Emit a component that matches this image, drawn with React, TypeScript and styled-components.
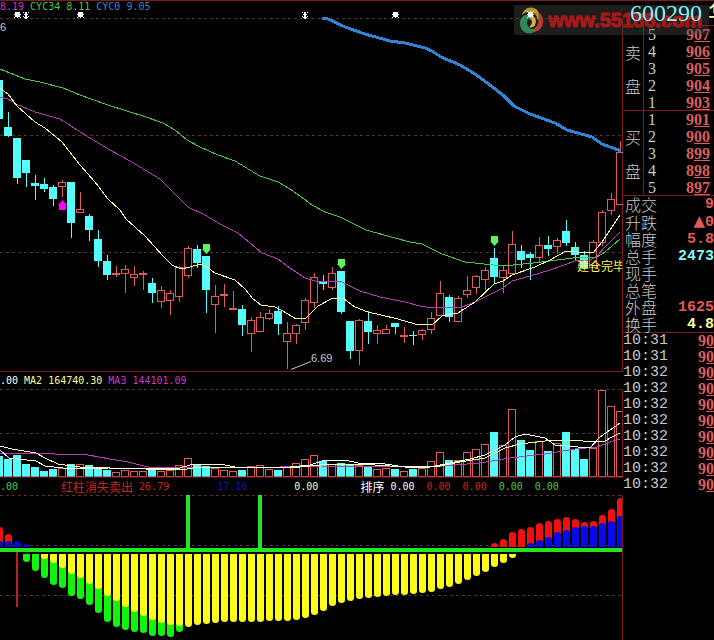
import React from "react";
import styled, { createGlobalStyle } from "styled-components";

const C = {
  cyan: "#54fcfc",
  red: "#e05a5a",
  grid: "#54342e",
  frame: "#7c1c1c",
  yellow: "#fcfc9c",
  magenta: "#b83cb8",
  green: "#48c848",
  lime: "#22e622",
  grey: "#c8c8c8",
  blue: "#2f86d8",
};

const Global = createGlobalStyle`
  html, body { margin: 0; background: #000; }
  * { box-sizing: border-box; }
`;

const Page = styled.div`
  position: relative;
  display: flex;
  min-height: 100vh;
  overflow: hidden;
  background: #000;
  color: ${C.grey};
  font-family: "DejaVu Sans Mono", "Noto Sans CJK SC", monospace;
`;

const Charts = styled.main`
  flex: 1;
  min-width: 0;
  border-top: 1px solid ${C.frame};
`;

const Pane = styled.section<{ $ruled?: boolean }>`
  display: flex;
  flex-direction: column;
  border-bottom: ${(p) => (p.$ruled ? `1px solid ${C.frame}` : "0")};
`;

const Legend = styled.div<{ $height: number }>`
  display: flex;
  height: ${(p) => p.$height}px;
  line-height: ${(p) => p.$height}px;
  font-size: 10px;
  white-space: pre;
  overflow: hidden;
`;

const Value = styled.span<{ $color: string; $gap?: number }>`
  display: flex;
  gap: 6px;
  margin-left: ${(p) => p.$gap ?? 0}px;
  color: ${(p) => p.$color};
`;

const Han = styled.span`
  font-family: "Noto Sans CJK SC", sans-serif;
  font-size: 12px;
`;

const Plot = styled.svg`
  display: block;
  width: 100%;
`;

const Quote = styled.aside`
  width: 91px;
  flex: none;
  overflow: hidden;
  border-top: 1px solid ${C.frame};
`;

const Title = styled.header`
  position: relative;
  z-index: 2;
  display: flex;
  gap: 6px;
  height: 25px;
  padding-left: 7px;
  border-bottom: 1px solid ${C.frame};
  font: 24px/24px "Liberation Serif", "Noto Sans CJK SC", serif;
  color: #84f0f4;
  white-space: nowrap;
`;

const Name = styled.span`
  color: ${C.yellow};
`;

const Sheet = styled.table`
  width: 100%;
  border-collapse: separate;
  border-spacing: 0;
`;

const Book = styled(Sheet)`
  box-shadow: inset 0 -1px ${C.frame};
`;

const Side = styled.th`
  width: 21px;
  padding: 0;
  border-right: 1px solid ${C.frame};
  font: 16px/34px "Noto Sans CJK SC", sans-serif;
  font-weight: 300;
`;

const Level = styled.td`
  padding: 0 0 0 4px;
  font: 16px/17px "Liberation Serif", serif;
`;

const Price = styled.td<{ $inset: number }>`
  padding: 0 ${(p) => p.$inset}px 0 0;
  text-align: right;
  font: bold 16px/16px "Liberation Serif", serif;
  color: ${C.red};
  u {
    text-underline-offset: 1px;
    text-decoration-thickness: 1px;
  }
`;

const Row = styled.tr<{ $height: number }>`
  height: ${(p) => p.$height}px;
`;

const Label = styled.th`
  padding: 0 0 0 2px;
  text-align: left;
  font: 16px/17px "Noto Sans CJK SC", sans-serif;
  font-weight: 300;
  white-space: nowrap;
`;

const Figure = styled.td<{ $color: string }>`
  padding: 0;
  text-align: right;
  font: bold 15px/17px "Liberation Mono", monospace;
  color: ${(p) => p.$color};
`;

const Up = styled.span`
  font-family: "DejaVu Sans", sans-serif;
  font-weight: normal;
`;

const Time = styled.td`
  padding: 0;
  font: 15px/16px "Liberation Mono", monospace;
`;

const Banner = styled.div`
  position: absolute;
  z-index: 1;
  top: 5px;
  right: 5px;
  display: flex;
  align-items: center;
  gap: 4px;
  height: 30px;
  padding: 0 7px 0 4px;
  background: rgba(72, 72, 72, 0.4);
`;

const Site = styled.a`
  font: bold 20px/30px "Liberation Sans", sans-serif;
  color: #a81818;
  -webkit-text-stroke: 1px #a81818;
  text-decoration: none;
`;

type Kind = "c" | "r";
type Candle = [Kind, number, number, number, number];

const candles: Candle[] = [
  ["c", 80, 80, 119, 119], ["c", 112, 127, 136, 137], ["c", 138, 138, 178, 184],
  ["c", 160, 160, 173, 187], ["c", 175, 183, 186, 200], ["c", 178, 184, 189, 192],
  ["c", 185, 187, 199, 206], ["r", 180, 182, 187, 197], ["c", 182, 182, 223, 238],
  ["r", 192, 209, 213, 213], ["c", 214, 216, 230, 241], ["c", 230, 239, 261, 267],
  ["c", 255, 261, 275, 280], ["r", 266, 273, 275, 277], ["r", 265, 269, 274, 293],
  ["r", 266, 274, 278, 286], ["r", 271, 273, 275, 290], ["c", 278, 283, 293, 303],
  ["r", 286, 290, 302, 308], ["r", 290, 293, 301, 315], ["r", 266, 267, 297, 302],
  ["r", 246, 248, 276, 278], ["c", 245, 249, 263, 268], ["c", 256, 256, 290, 313],
  ["r", 285, 296, 305, 333], ["r", 284, 294, 296, 307], ["r", 291, 308, 310, 310],
  ["c", 305, 309, 325, 336], ["r", 317, 320, 334, 352], ["r", 312, 317, 332, 332],
  ["r", 309, 313, 319, 320], ["c", 306, 311, 324, 335], ["r", 322, 333, 342, 369],
  ["r", 324, 325, 334, 344], ["r", 298, 300, 323, 330], ["r", 273, 277, 303, 308],
  ["c", 275, 281, 284, 290], ["r", 267, 273, 288, 290], ["c", 271, 271, 312, 314],
  ["c", 321, 321, 351, 359], ["r", 319, 320, 351, 365], ["c", 311, 321, 332, 344],
  ["r", 325, 330, 334, 344], ["r", 325, 329, 334, 334], ["c", 323, 323, 327, 334],
  ["r", 327, 335, 337, 343], ["c", 331, 335, 336, 345], ["r", 329, 330, 335, 340],
  ["r", 312, 318, 330, 334], ["r", 281, 293, 316, 316], ["c", 295, 297, 317, 322],
  ["r", 296, 298, 322, 322], ["r", 276, 290, 295, 298], ["r", 275, 276, 288, 294],
  ["r", 267, 270, 280, 290], ["c", 248, 258, 277, 283], ["r", 265, 270, 278, 293],
  ["r", 231, 244, 274, 274], ["c", 245, 251, 260, 268], ["c", 252, 254, 258, 280],
  ["r", 237, 245, 258, 262], ["c", 236, 245, 249, 256], ["r", 238, 240, 247, 254],
  ["c", 220, 231, 243, 246], ["c", 242, 247, 255, 261], ["c", 251, 255, 268, 268],
  ["r", 240, 242, 268, 268], ["r", 210, 212, 243, 246], ["r", 193, 199, 211, 215],
  ["r", 141, 152, 205, 205],
];

const volumeTops = [
  456, 459, 455, 464, 467, 471, 469, 468, 464, 464, 465, 469, 470, 472, 470, 471, 471, 470, 471,
  470, 465, 458, 465, 466, 468, 470, 471, 470, 466, 465, 469, 470, 466, 463, 459, 455, 461, 464,
  463, 465, 465, 466, 469, 468, 469, 471, 469, 468, 461, 452, 460, 460, 452, 449, 444, 432, 445,
  409, 440, 450, 441, 451, 443, 432, 449, 459, 448, 390, 406, 411,
];

const greenBottoms = [
  562, 571, 578, 585, 588, 596, 599, 605, 613, 622, 627, 630, 632, 633, 636, 636, 637, 632,
];

const yellowBottoms = [
  559, 563, 568, 574, 578, 584, 589, 596, 601, 607, 612, 616, 620, 623, 625, 626, 627, 625, 624,
  623, 622, 622, 622, 622, 622, 621, 621, 621, 620, 618, 615, 611, 606, 603, 601, 599, 598, 597,
  596, 595, 595, 594, 593, 592, 589, 587, 584, 580, 576, 572, 567, 563, 558,
];

const redTops = [543, 539, 532, 529, 527, 523, 521, 519, 517, 519, 522, 521, 515, 509, 498];
const blueTops = [543, 540, 537, 532, 530, 527, 526, 526, 523, 521, 516];

const at = (i: number) => -1 + i * 9;

const Grid = ({ y }: { y: number }) => (
  <path d={`M0 ${y}.5H622`} stroke={C.grid} strokeDasharray="3 3" />
);

const Edge = ({ from, to }: { from: number; to: number }) => (
  <path d={`M622.5 ${from}V${to}`} stroke={C.frame} />
);

const Line = ({ points, color, width = 1 }: { points: string; color: string; width?: number }) => (
  <polyline
    points={points}
    fill="none"
    stroke={color}
    strokeWidth={width}
    strokeLinejoin="round"
    shapeRendering="crispEdges"
  />
);

const CandleMark = ({ x, data }: { x: number; data: Candle }) => {
  const [kind, high, top, bottom, low] = data;
  if (kind === "c") {
    return (
      <g fill={C.cyan} shapeRendering="crispEdges">
        <rect x={x} y={high} width="1" height={low - high} />
        <rect x={x - 4} y={top} width="8" height={Math.max(1, bottom - top)} />
      </g>
    );
  }
  return (
    <g fill="none" stroke={C.red} shapeRendering="crispEdges">
      <path d={`M${x + 0.5} ${high}V${top}M${x + 0.5} ${bottom}V${low}`} />
      <rect x={x - 3.5} y={top + 0.5} width="7" height={Math.max(1, bottom - top - 1)} />
    </g>
  );
};

const sunRows = ["#..#..#", ".#####.", ".#####.", "#######", ".#####.", ".#####.", "#..#..#"];
const splitRows = ["..##..", ".####.", "#.##.#", "..##..", ".####.", "..##..", "#.##.#", ".####.", "..##.."];

const Glyph = ({ x, y, rows }: { x: number; y: number; rows: string[] }) => (
  <path
    fill="#fff"
    shapeRendering="crispEdges"
    d={rows
      .map((row, r) =>
        [...row].map((dot, c) => (dot === "#" ? `M${x + c} ${y + r}h1v1h-1z` : "")).join("")
      )
      .join("")}
  />
);

const PricePlot = () => (
  <Plot height="359" viewBox="0 12 623 359" preserveAspectRatio="xMaxYMin meet" role="img" aria-label="K线">
    <Grid y={18} />
    <Grid y={135} />
    <Grid y={252} />
    <Edge from={18} to={371} />
    {candles.map((c, i) => (
      <CandleMark key={i} x={at(i)} data={c} />
    ))}
    <Line color={C.green} points="0,69 10,73 25,79 40,82 63,88 80,95 105,104 130,112 143,116 163,123 175,130 187,140 200,147 218,155 235,161 245,167 260,176 278,182 290,189 304,199 312,205 325,212 340,217 366,230 395,238 410,242 422,244 442,254 465,262 503,266 533,263 573,258 597,257 605,252 620,239" />
    <Line color={C.magenta} points="0,97 8,99 16,104 35,112 60,119 85,135 110,150 130,161 160,179 181,200 188,207 205,215 220,224 238,233 250,243 262,253 278,259 290,268 305,278 315,281 335,281 342,282 360,291 380,297 405,302 420,306 432,308 462,307 475,302 503,288 512,281 530,276 550,270 575,261 590,260 597,256 605,247 620,232" />
    <Line color={C.yellow} points="0,88 8,94 17,106 35,122 45,128 62,142 80,165 95,182 108,199 120,210 126,219 145,236 163,256 172,265 181,269 190,267 200,264 207,267 215,273 235,280 245,289 253,299 261,305 275,307 283,311 296,319 306,318 318,306 333,298 343,298 355,307 368,312 398,319 415,324 432,325 442,316 458,313 475,302 494,284 503,281 512,275 535,267 550,260 566,251 577,252 593,253 602,242 620,215" />
    <Line color={C.blue} width={3} points="322,18 328,19 345,27 365,34 390,41 405,43 425,48 432,51 441,57 460,65 475,74 490,85 504,96 514,106 530,114 555,123 567,130 592,137 602,144 621,151" />
    {[[206, 244], [341, 259], [494, 236]].map(([x, y]) => (
      <path key={x} d={`M${x - 3} ${y}h7v5h1l-4.5 5l-4.5 -5h1z`} fill="#5cf45c" />
    ))}
    <path d="M59 210h7v-5h1l-4.5 -5l-4.5 5h1z" fill="#fc00fc" />
    <Glyph x={14} y={11} rows={sunRows} />
    <Glyph x={77} y={11} rows={sunRows} />
    <Glyph x={392} y={11} rows={sunRows} />
    <Glyph x={23} y={10} rows={splitRows} />
    <Glyph x={302} y={10} rows={splitRows} />
    <path d="M291 369.5L311 361.5" stroke={C.grey} />
    <g fontFamily="Liberation Sans, sans-serif" fontSize="11" fill={C.grey}>
      <text x="0" y="31">6</text>
      <text x="311" y="362">6.69</text>
    </g>
    <svg x="570" y="255" width="52" height="24">
      <text x="7" y="16" fontFamily="Noto Sans CJK SC, sans-serif" fontSize="12" fill="#fcfc54">建仓完毕</text>
    </svg>
  </Plot>
);

const VolumePlot = () => (
  <Plot height="89" viewBox="0 389 623 89" preserveAspectRatio="xMaxYMin meet" role="img" aria-label="成交量">
    <Grid y={389} />
    <Grid y={433} />
    {volumeTops.map((top, i) =>
      candles[i][0] === "c" ? (
        <rect key={i} x={at(i) - 4} y={top} width="8" height={477 - top} fill={C.cyan} />
      ) : (
        <rect key={i} x={at(i) - 3.5} y={top + 0.5} width="7" height={476 - top} fill="none" stroke={C.red} />
      )
    )}
    <path d="M0 477H622" stroke="#a02424" />
    <Edge from={389} to={478} />
    <Line color={C.magenta} points="0,454 30,453 55,454 88,455 110,459 128,462 148,467 165,467 240,468 320,466 430,467 480,463 510,458 545,454 575,449 597,447 610,442 620,439" />
    <Line color={C.yellow} points="0,446 12,449 36,453 45,458 58,464 80,467 110,468 180,470 200,467 215,467 300,467 330,464 360,464 390,466 440,466 460,462 485,458 505,448 520,444 545,441 575,440 590,442 605,441 612,437 620,433" />
    <Line color="#fff" points="0,450 9,458 36,461 45,466 63,468 108,468 150,469 180,468 190,465 220,464 235,467 290,467 310,465 322,461 345,460 358,463 385,464 405,467 430,467 445,464 470,459 485,455 505,445 515,437 525,434 545,438 555,445 590,448 600,437 610,430 620,423" />
  </Plot>
);

const down = (x: number, bottom: number) =>
  `M${x - 3} 554h7V${bottom - 3}q0 3 -3.5 3q-3.5 0 -3.5 -3z`;
const up = (x: number, top: number) =>
  `M${x - 3} 547V${Math.min(547, top + 3)}q0 -3 3.5 -3q3.5 0 3.5 3V547z`;

const SignalPlot = () => (
  <Plot height="145" viewBox="0 495 623 145" preserveAspectRatio="xMaxYMin meet" role="img" aria-label="红柱消失卖出">
    <Grid y={495} />
    <Grid y={545} />
    <Grid y={595} />
    {greenBottoms.map((b, i) => (
      <path key={i} d={down(26 + i * 9, b)} fill="#10f410" />
    ))}
    {yellowBottoms.map((b, i) => (
      <path key={i} d={down(44 + i * 9, b)} fill="#fcfc18" />
    ))}
    {redTops.map((t, i) => (
      <path key={i} d={up(494 + i * 9, t)} fill="#f01010" />
    ))}
    {blueTops.map((t, i) => (
      <path key={i} d={up(530 + i * 9, t)} fill="#0808e8" />
    ))}
    <path d={up(-1, 527) + up(8, 534)} fill="#f01010" />
    <path d={up(-1, 541) + up(8, 541) + up(17, 541) + up(26, 544)} fill="#0808d0" />
    <path d="M17 552V607" stroke="#c02020" strokeWidth="2" />
    <path d="M188 495V549M260 495V549M0 550H622" stroke={C.lime} strokeWidth="4" />
    <path d="M622.5 495V640" stroke={C.frame} />
  </Plot>
);

const Emblem = () => (
  <svg width="26" height="30" viewBox="0 0 26 30" aria-hidden="true">
    <path d="M4 10C5 4 12 0 18 4C22 7 22 12 20 16C19 10 16 7 12 7C8 7 6 8 4 10Z" fill="#b8982c" />
    <path d="M20 7C26 10 27 19 22 24C18 28 12 28 9 25C15 25 19 23 20 18C21 14 21 10 20 7Z" fill="#b83c30" />
    <path d="M14 28C8 30 2 25 2 19C2 13 7 9 12 12C9 14 8 18 10 21C11 24 15 25 18 24Z" fill="#2c8c58" />
    <path d="M2 17C3 11 9 8 14 11C18 13 18 19 15 22C15 18 14 15 10 14C7 13 4 14 2 17Z" fill="#388858" />
    <path d="M11 11C15 9 20 14 17 20C16 22 13 23 11 22C15 19 15 14 11 11Z" fill="#d8b048" />
    <Glyph x={9} y={6} rows={sunRows} />
  </svg>
);

const Underlined = ({ value }: { value: string }) => (
  <>
    {value[0]}
    <u>{value.slice(1)}</u>
  </>
);

const BookSide = ({ side, rows }: { side: [string, string]; rows: [number, string][] }) => (
  <Book>
    <tbody>
      {rows.map(([level, price], i) => (
        <Row $height={17} key={level}>
          {i === 0 && (
            <Side rowSpan={5} scope="rowgroup">
              {side[0]}
              <br />
              {side[1]}
            </Side>
          )}
          <Level>{level}</Level>
          <Price $inset={4}>
            <Underlined value={price} />
          </Price>
        </Row>
      ))}
    </tbody>
  </Book>
);

const stats: [string, React.ReactNode, string][] = [
  ["成交", "9", C.red],
  ["升跌", <><Up>▲</Up>0</>, C.red],
  ["幅度", "5.8", C.red],
  ["总手", "2473", "#84f8fc"],
  ["现手", "", C.red],
  ["总笔", "", C.red],
  ["外盘", "1625", C.red],
  ["换手", "4.8", C.yellow],
];

const ticks = ["10:31", "10:31", ...Array(8).fill("10:32")];

export default function App() {
  return (
    <>
      <Global />
      <Page>
        <Charts>
          <Pane $ruled>
            <Legend $height={11}>
              <Value $color="#c838c8">8.19</Value>
              <Value $color={C.green} $gap={6}>CYC34 8.11</Value>
              <Value $color={C.blue} $gap={6}>CYC0 9.05</Value>
            </Legend>
            <PricePlot />
          </Pane>
          <Pane>
            <Legend $height={17}>
              <Value $color="#fff">.00</Value>
              <Value $color={C.yellow} $gap={6}>MA2 164740.30</Value>
              <Value $color="#c838c8" $gap={6}>MA3 144101.09</Value>
            </Legend>
            <VolumePlot />
          </Pane>
          <Pane>
            <Legend $height={17}>
              <Value $color={C.green}>.00</Value>
              <Value $color="#cc2424" $gap={43}><Han>红柱消失卖出</Han><span>26.79</span></Value>
              <Value $color="#1414b4" $gap={48}>17.10</Value>
              <Value $color="#fcfcc0" $gap={47}>0.00</Value>
              <Value $color="#fff" $gap={42}><Han>排序</Han><span>0.00</span></Value>
              <Value $color="#cc2424" $gap={12}>0.00</Value>
              <Value $color="#cc2424" $gap={12}>0.00</Value>
              <Value $color={C.green} $gap={12}>0.00</Value>
              <Value $color={C.green} $gap={12}>0.00</Value>
            </Legend>
            <SignalPlot />
          </Pane>
        </Charts>
        <Quote>
          <Title>
            <span>600290</span>
            <Name>华</Name>
          </Title>
          <BookSide side={["卖", "盘"]} rows={[[5, "907"], [4, "906"], [3, "905"], [2, "904"], [1, "903"]]} />
          <BookSide side={["买", "盘"]} rows={[[1, "901"], [2, "900"], [3, "899"], [4, "898"], [5, "897"]]} />
          <Book>
            <tbody>
              {stats.map(([label, value, color]) => (
                <Row $height={17} key={label}>
                  <Label scope="row">{label}</Label>
                  <Figure $color={color}>{value}</Figure>
                </Row>
              ))}
            </tbody>
          </Book>
          <Sheet>
            <tbody>
              {ticks.map((t, i) => (
                <Row $height={16} key={i}>
                  <Time>{t}</Time>
                  <Price $inset={0}>
                    <Underlined value="90" />
                  </Price>
                </Row>
              ))}
            </tbody>
          </Sheet>
        </Quote>
        <Banner>
          <Emblem />
          <Site href="#">www.55188.com</Site>
        </Banner>
      </Page>
    </>
  );
}
